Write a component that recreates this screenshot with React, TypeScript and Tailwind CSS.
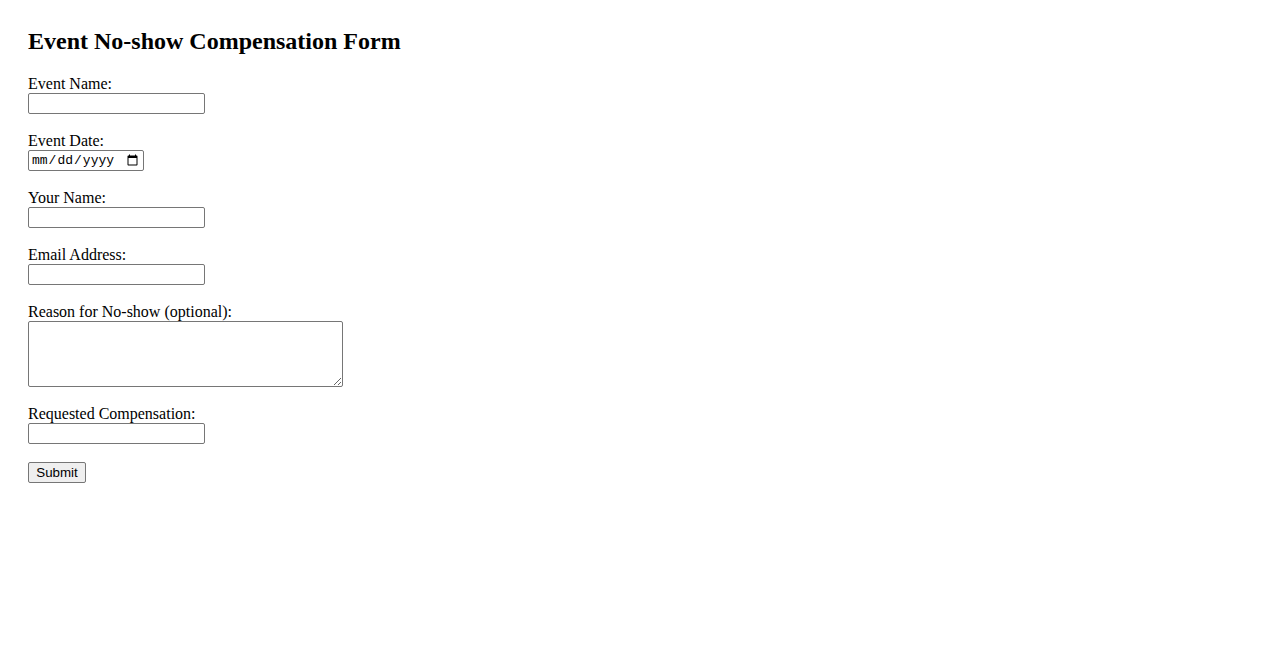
import React from 'react'

const inputCls =
  "block w-[177px] h-[21px] border border-[#767676] rounded-[2px] bg-white px-[2px] py-[1px] font-['Liberation_Sans',Arial,sans-serif] text-[13.33px] text-black"

const Field: React.FC<{ label: string; children: React.ReactNode }> = ({ label, children }) => (
  <div className="mb-[18px]">
    <label className="block leading-[18px]">{label}</label>
    {children}
  </div>
)

const App: React.FC = () => {
  return (
    <div className="min-h-screen bg-white p-[28px] font-['Liberation_Serif','Times_New_Roman',serif] text-[16px] text-black">
      <h2 className="text-[24px] font-bold leading-[26px] mb-[21px]">Event No-show Compensation Form</h2>
      <form onSubmit={(e) => e.preventDefault()}>
        <Field label="Event Name:">
          <input type="text" className={inputCls} />
        </Field>
        <Field label="Event Date:">
          <input
            type="date"
            className="block w-[116px] h-[21px] border border-[#767676] rounded-[2px] bg-white px-[2px] py-[1px] font-['Liberation_Mono',monospace] text-[13px] text-black"
          />
        </Field>
        <Field label="Your Name:">
          <input type="text" className={inputCls} />
        </Field>
        <Field label="Email Address:">
          <input type="email" className={inputCls} />
        </Field>
        <Field label="Reason for No-show (optional):">
          <textarea className="block w-[315px] h-[66px] border border-[#767676] rounded-[2px] bg-white px-[2px] py-[1px] font-['Liberation_Mono',monospace] text-[13.33px] text-black" />
        </Field>
        <Field label="Requested Compensation:">
          <input type="text" className={inputCls} />
        </Field>
        <button
          type="submit"
          className="block w-[58px] h-[21px] border border-[#767676] rounded-[2px] bg-[#efefef] font-['Liberation_Sans',Arial,sans-serif] text-[13.33px] leading-[19px] text-black"
        >
          Submit
        </button>
      </form>
    </div>
  )
}

export default App
